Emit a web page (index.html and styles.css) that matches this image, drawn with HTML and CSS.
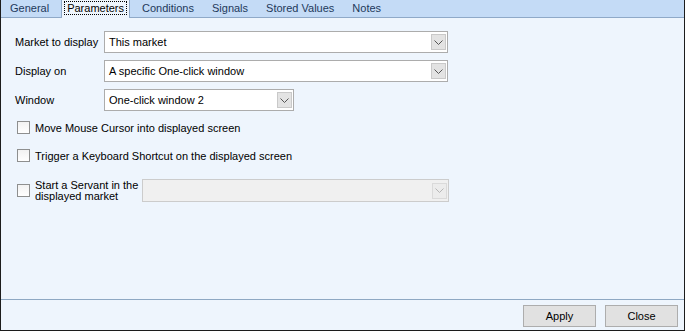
FILE: index.html
```html
<!DOCTYPE html>
<html lang="en">
<head>
    <meta charset="UTF-8">
    <title>Parameters</title>
    <link rel="stylesheet" href="styles.css">
</head>
<body>

    <div class="window">
        <!-- Pestañas -->
        <div class="tabs">
            <div class="tab">General</div>
            <div class="tab active"><span class="focus">Parameters</span></div>
            <div class="tab">Conditions</div>
            <div class="tab">Signals</div>
            <div class="tab">Stored Values</div>
            <div class="tab">Notes</div>
        </div>

        <div class="panel">
            <div class="row">
                <label class="label">Market to display</label>
                <div class="combo wide">
                    <span class="value">This market</span>
                    <span class="drop"><svg width="9" height="5" viewBox="0 0 9 5"><path d="M0.5 0.5 L4.5 4.5 L8.5 0.5" fill="none" stroke="#555" stroke-width="1"/></svg></span>
                </div>
            </div>
            <div class="row">
                <label class="label">Display on</label>
                <div class="combo wide">
                    <span class="value">A specific One-click window</span>
                    <span class="drop"><svg width="9" height="5" viewBox="0 0 9 5"><path d="M0.5 0.5 L4.5 4.5 L8.5 0.5" fill="none" stroke="#555" stroke-width="1"/></svg></span>
                </div>
            </div>
            <div class="row">
                <label class="label">Window</label>
                <div class="combo narrow">
                    <span class="value">One-click window 2</span>
                    <span class="drop"><svg width="9" height="5" viewBox="0 0 9 5"><path d="M0.5 0.5 L4.5 4.5 L8.5 0.5" fill="none" stroke="#555" stroke-width="1"/></svg></span>
                </div>
            </div>

            <div class="check first">
                <span class="box"></span>
                <span>Move Mouse Cursor into displayed screen</span>
            </div>
            <div class="check">
                <span class="box"></span>
                <span>Trigger a Keyboard Shortcut on the displayed screen</span>
            </div>
            <div class="check servant">
                <span class="box"></span>
                <span class="two-lines">Start a Servant in the<br>displayed market</span>
                <div class="combo disabled">
                    <span class="value"></span>
                    <span class="drop"><svg width="9" height="5" viewBox="0 0 9 5"><path d="M0.5 0.5 L4.5 4.5 L8.5 0.5" fill="none" stroke="#b5b5b5" stroke-width="1"/></svg></span>
                </div>
            </div>
        </div>

        <!-- Botones -->
        <div class="footer">
            <button class="btn">Apply</button>
            <button class="btn">Close</button>
        </div>
    </div>

</body>
</html>
```

FILE: styles.css
```css
/* Estilo general */
body {
    margin: 0;
    padding: 0;
    font-family: 'Liberation Sans', Arial, sans-serif;
    font-size: 11px;
    color: #000;
}

.window {
    width: 685px;
    height: 331px;
    box-sizing: border-box;
    border: 1px solid #1c1c1c;
    border-top: none;
    background-color: #eef5fd;
    display: flex;
    flex-direction: column;
}

/* Pestañas */
.tabs {
    height: 17px;
    background-color: #c4dbf6;
    border-bottom: 1px solid #8fa9c8;
    display: flex;
    padding-left: 1px;
}

.tab {
    padding: 2px 8px 0 8px;
    margin-right: 2px;
    color: #1e395b;
    line-height: 13px;
}

.active {
    background-color: #eef5fd;
    border-left: 1px solid #8fa9c8;
    border-right: 1px solid #8fa9c8;
    margin-bottom: -1px;
    padding: 1px 2px 0 2px;
    margin-left: 2px;
    margin-right: 4px;
}

.focus {
    display: inline-block;
    color: #000;
    border: 1px dotted #000;
    padding: 0 2px;
    line-height: 12px;
}

/* Panel */
.panel {
    flex: 1;
    padding: 13px 0 0 14px;
}

.row {
    display: flex;
    align-items: center;
    height: 22px;
    margin-bottom: 7px;
}

.label {
    width: 89px;
}

.combo {
    height: 22px;
    box-sizing: border-box;
    border: 1px solid #acacac;
    background-color: #fff;
    display: flex;
    align-items: center;
    justify-content: space-between;
}

.wide {
    width: 344px;
}

.narrow {
    width: 190px;
}

.value {
    padding-left: 4px;
}

.drop {
    width: 15px;
    height: 16px;
    margin-right: 1px;
    box-sizing: border-box;
    border: 1px solid #c9c9c9;
    background-color: #e3e3e3;
    display: flex;
    align-items: center;
    justify-content: center;
}

/* Casillas */
.check {
    display: flex;
    align-items: center;
    gap: 5px;
    padding-left: 2px;
    margin-bottom: 15px;
}

.check.first {
    margin-top: 10px;
}

.box {
    width: 13px;
    height: 13px;
    box-sizing: border-box;
    border: 1px solid #8e8f8f;
    background: linear-gradient(#f2f2f2, #fff);
}

.servant {
    margin-top: 17px;
}

.two-lines {
    line-height: 11px;
    width: 110px;
}

.disabled {
    width: 307px;
    height: 23px;
    margin-left: -8px;
    background-color: #f0f0f0;
    border-color: #cccccc;
}

.disabled .drop {
    border-color: #dadada;
    background-color: #ececec;
}

/* Botones */
.footer {
    height: 31px;
    border-top: 1px solid #8ea8c3;
    display: flex;
    justify-content: flex-end;
    align-items: flex-start;
    gap: 9px;
    padding: 5px 6px 0 0;
    box-sizing: border-box;
}

.btn {
    width: 73px;
    height: 22px;
    background-color: #e1e1e1;
    border: 1px solid #adadad;
    font-family: 'Liberation Sans', Arial, sans-serif;
    font-size: 11px;
    color: #000;
    padding: 0;
}
```
